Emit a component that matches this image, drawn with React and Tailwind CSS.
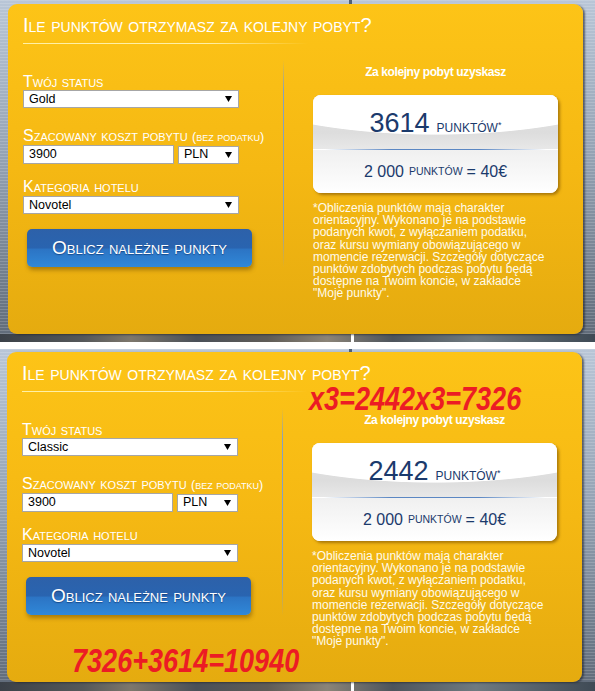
import clsx from 'clsx';

// Arial Narrow look: bold italic squeezed horizontally
const NOTE =
  "absolute inline-block origin-left scale-x-[0.82] text-[33px] leading-[33px] font-bold italic text-[#ec1c24] whitespace-nowrap";

function Caps({ className, children }) {
  return <div className={clsx('[font-variant-caps:small-caps] whitespace-nowrap', className)}>{children}</div>;
}

function Select({ value, className }) {
  return (
    <div
      className={clsx(
        'flex items-center justify-between bg-white border border-[#a6a6a6] pl-[5px] pr-[6px] text-[12.5px] text-black',
        className
      )}
    >
      <span>{value}</span>
      <svg width="7" height="6" viewBox="0 0 7 6">
        <path d="M0 0h7L3.5 6z" fill="#000" />
      </svg>
    </div>
  );
}

function ResultCard({ points }) {
  return (
    <div className="w-[245px] h-[98px] rounded-[8px] overflow-hidden bg-white text-[#1b3a6c] shadow-[2px_2px_3px_rgba(110,70,0,0.55)]">
      <div className="h-[54px] pt-[15px] text-center leading-[27px] bg-[radial-gradient(253px_80px_at_50%_-40px,#ffffff_99%,rgba(255,255,255,0)_100%),linear-gradient(180deg,#e4e4e4_0%,#dddddd_70%,#e8e8e8_100%)]">
        <span className="text-[27px]">{points}</span>
        <span className="ml-[7px] text-[12px] uppercase">Punktów</span>
        <sup className="text-[9px]">*</sup>
      </div>
      <div className="h-px mx-[12px] bg-[linear-gradient(90deg,rgba(90,135,195,0),#5b87c3_30%,#5b87c3_70%,rgba(90,135,195,0))]" />
      <div className="h-[43px] flex items-center justify-center bg-[linear-gradient(180deg,#f0f0f0,#ffffff)]">
        <span className="text-[16px]">2 000</span>
        <span className="ml-[5px] text-[10.5px] uppercase">punktów</span>
        <span className="ml-[4px] text-[16px]">= 40€</span>
      </div>
    </div>
  );
}

function Panel({ status, points, children }) {
  return (
    <div className="relative w-[575px] h-[330px] rounded-[9px] px-[15px] pt-[9px] text-white bg-[linear-gradient(180deg,#fdc417_0%,#f5b813_50%,#e5ab0f_100%)] shadow-[2px_1px_2px_rgba(30,35,45,0.6)]">
      <Caps className="text-[20px] leading-[24px]">Ile punktów otrzymasz za kolejny pobyt?</Caps>
      <div className="mt-[6px] h-px w-[285px] bg-[linear-gradient(90deg,#fff0a6_0%,#fff0a6_65%,rgba(255,240,166,0)_100%)]" />

      <div className="mt-[16px] flex">
        {/* form */}
        <div className="w-[260px] pt-[14px]">
          <Caps className="text-[16px] leading-[16px]">Twój status</Caps>
          <Select value={status} className="w-[216px] h-[18px]" />

          <Caps className="mt-[20px] text-[16px] leading-[16px]">
            Szacowany koszt pobytu <span className="text-[12.5px]">(bez podatku)</span>
          </Caps>
          <div className="flex items-center gap-[4px]">
            <div className="w-[151px] h-[19px] bg-white border border-[#a6a6a6] pl-[5px] text-[12.5px] leading-[17px] text-black">
              3900
            </div>
            <Select value="PLN" className="w-[61px] h-[18px]" />
          </div>

          <Caps className="mt-[15px] text-[16px] leading-[16px]">Kategoria hotelu</Caps>
          <Select value="Novotel" className="mt-[1px] w-[216px] h-[18px]" />

          <button className="mt-[15px] ml-[4px] w-[225px] h-[38px] rounded-[5px] text-white text-[19px] [font-variant-caps:small-caps] [text-shadow:0_1px_1px_rgba(0,30,80,0.5)] bg-[linear-gradient(180deg,#2d61a9_0%,#2964b0_50%,#2c74c4_53%,#3088d8_100%)] shadow-[1px_3px_4px_rgba(90,60,0,0.45)]">
            Oblicz należne punkty
          </button>
        </div>

        <div className="w-px h-[208px] bg-[linear-gradient(180deg,rgba(120,150,190,0),#86a0c2_15%,#86a0c2_80%,rgba(120,150,190,0))]" />

        {/* result */}
        <div className="pl-[29px] pt-[5px] w-[274px]">
          <div className="w-[245px] text-center text-[12px] leading-[14px] font-bold tracking-[-0.4px]">
            Za kolejny pobyt uzyskasz
          </div>
          <div className="mt-[16px]">
            <ResultCard points={points} />
          </div>
          <p className="mt-[9px] text-[12px] leading-[12.2px] text-[#fffbea] whitespace-nowrap">
            *Obliczenia punktów mają charakter
            <br />
            orientacyjny. Wykonano je na podstawie
            <br />
            podanych kwot, z wyłączaniem podatku,
            <br />
            oraz kursu wymiany obowiązującego w
            <br />
            momencie rezerwacji. Szczegóły dotyczące
            <br />
            punktów zdobytych podczas pobytu będą
            <br />
            dostępne na Twoim koncie, w zakładce
            <br />
            "Moje punkty".
          </p>
        </div>
      </div>
      {children}
    </div>
  );
}

function Shot({ topClass, rowClass, children }) {
  return (
    <div className="h-[342px] flex flex-col bg-[repeating-linear-gradient(180deg,rgba(255,255,255,0.16)_0px,rgba(255,255,255,0.16)_1px,rgba(0,0,0,0)_1px,rgba(0,0,0,0)_3px),linear-gradient(180deg,#b9c6d7_0%,#95a3b4_45%,#5f6a78_100%)]">
      <div className={clsx('flex', topClass)}>
        <div className="ml-[349px] w-[3px] bg-[#4f6078]" />
      </div>
      <div className={rowClass}>{children}</div>
      <div className="flex flex-1 bg-[linear-gradient(90deg,#3b4148_0%,#55585a_14%,#7d776c_22%,#4a5058_33%,#5f5c57_45%,#8b8478_55%,#4d545c_66%,#6f7a80_80%,#3f4a55_100%)]">
        <div className="ml-[351px] w-[3px] bg-white" />
      </div>
    </div>
  );
}

export default function App() {
  return (
    <div className="w-[595px] h-[691px] overflow-hidden bg-white font-['Liberation_Sans',Arial,sans-serif]">
      <Shot topClass="h-[4px]" rowClass="pl-[8px]">
        <Panel status="Gold" points="3614" />
      </Shot>
      <div className="h-[7px] bg-white" />
      <Shot topClass="h-[3px]" rowClass="pl-[7px]">
        <Panel status="Classic" points="2442">
          <span className={clsx(NOTE, 'left-[302px] top-[30px]')}>x3=2442x3=7326</span>
          <span className={clsx(NOTE, 'left-[65px] top-[292px]')}>7326+3614=10940</span>
        </Panel>
      </Shot>
    </div>
  );
}
